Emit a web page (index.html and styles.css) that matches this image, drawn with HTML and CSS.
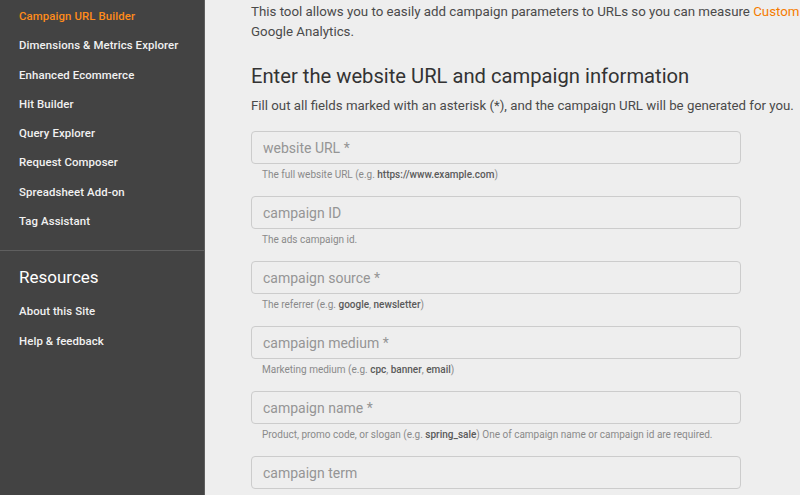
FILE: index.html
```html
<!DOCTYPE html>
<html lang="en">
<head>
  <meta charset="UTF-8">
  <meta name="viewport" content="width=device-width, initial-scale=1.0">
  <title>Campaign URL Builder</title>
  <link rel="stylesheet" href="styles.css">
</head>
<body>
  <div class="page">
    <nav class="sidebar">
      <ul class="nav-list">
        <li class="active">Campaign URL Builder</li>
        <li>Dimensions &amp; Metrics Explorer</li>
        <li>Enhanced Ecommerce</li>
        <li>Hit Builder</li>
        <li>Query Explorer</li>
        <li>Request Composer</li>
        <li>Spreadsheet Add-on</li>
        <li>Tag Assistant</li>
      </ul>
      <div class="nav-section">
        <h3>Resources</h3>
        <ul class="nav-list">
          <li>About this Site</li>
          <li>Help &amp; feedback</li>
        </ul>
      </div>
    </nav>

    <main class="content">
      <p class="intro">This tool allows you to easily add campaign parameters to URLs so you can measure <a href="#">Custom</a><br>Google Analytics.</p>

      <h2>Enter the website URL and campaign information</h2>
      <p class="lead">Fill out all fields marked with an asterisk (*), and the campaign URL will be generated for you.</p>

      <form class="fields">
        <div class="field">
          <input type="text" placeholder="website URL *">
          <span class="hint">The full website URL (e.g. <b>https://www.example.com</b>)</span>
        </div>
        <div class="field">
          <input type="text" placeholder="campaign ID">
          <span class="hint">The ads campaign id.</span>
        </div>
        <div class="field">
          <input type="text" placeholder="campaign source *">
          <span class="hint">The referrer (e.g. <b>google</b>, <b>newsletter</b>)</span>
        </div>
        <div class="field">
          <input type="text" placeholder="campaign medium *">
          <span class="hint">Marketing medium (e.g. <b>cpc</b>, <b>banner</b>, <b>email</b>)</span>
        </div>
        <div class="field">
          <input type="text" placeholder="campaign name *">
          <span class="hint">Product, promo code, or slogan (e.g. <b>spring_sale</b>) One of campaign name or campaign id are required.</span>
        </div>
        <div class="field field-last">
          <input type="text" placeholder="campaign term">
        </div>
      </form>
    </main>
  </div>
</body>
</html>
```

FILE: styles.css
```css
body {
  margin: 0;
  font-family: Roboto, "Noto Sans", Arial, sans-serif;
  background-color: #eeeeee;
  overflow: hidden;
  height: 495px;
}

.page {
  display: flex;
  height: 495px;
}

.sidebar {
  flex: 0 0 204px;
  background-color: #434343;
  border-right: 1px solid #5e5e5e;
  color: #f1f1f1;
}

.nav-list {
  list-style: none;
  margin: 0;
  padding: 2px 0 0 19px;
}

.nav-list li {
  font-size: 11.4px;
  font-weight: 500;
  line-height: 29.3px;
  letter-spacing: 0.1px;
}

.nav-list li.active {
  color: #ff8b1a;
}

.nav-section {
  margin-top: 14px;
  border-top: 1px solid #5f5f5f;
}

.nav-section h3 {
  margin: 0;
  padding: 16px 0 10px 19px;
  font-size: 17px;
  font-weight: 400;
  color: #ffffff;
}

.nav-section .nav-list {
  padding-top: 0;
}

.content {
  flex: 0 0 550px;
  padding-left: 46px;
  color: #4a4a4a;
}

.intro {
  margin: 2px 0 0;
  font-size: 13.3px;
  line-height: 20px;
  white-space: nowrap;
}

.intro a {
  color: #f57c00;
  text-decoration: none;
}

h2 {
  margin: 22px 0 0;
  font-size: 20.2px;
  font-weight: 400;
  color: #333333;
  white-space: nowrap;
}

.lead {
  margin: 10px 0 0;
  font-size: 13.25px;
  white-space: nowrap;
}

.fields {
  margin-top: 18px;
  width: 490px;
}

.field {
  display: flex;
  flex-direction: column;
  height: 65px;
}

.field-last {
  height: 33px;
}

.field input {
  box-sizing: border-box;
  height: 33px;
  padding: 0 11px;
  border: 1.5px solid #cccccc;
  border-radius: 4px;
  background-color: #eeeeee;
  font-family: inherit;
  font-size: 14px;
  outline: none;
}

.field input::placeholder {
  color: #959595;
}

.hint {
  padding: 5px 0 0 11px;
  font-size: 10px;
  color: #8a8a8a;
}

.hint b {
  font-weight: 500;
  color: #5a5a5a;
}
```
